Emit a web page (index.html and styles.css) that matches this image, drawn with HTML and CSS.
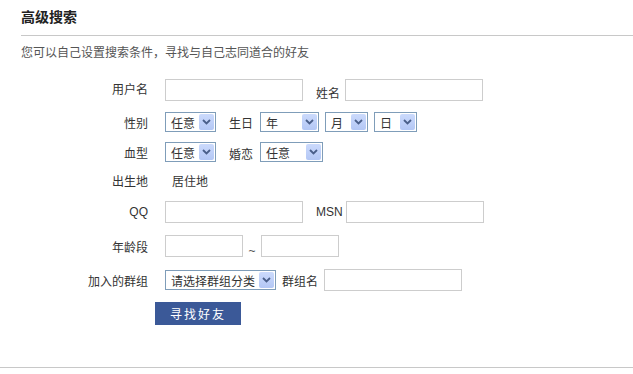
FILE: index.html
```html
<!DOCTYPE html>
<html lang="zh-CN">
<head>
  <meta charset="UTF-8">
  <meta name="viewport" content="width=device-width, initial-scale=1.0"/>
  <title>高级搜索</title>
  <link rel="stylesheet" href="styles.css">
</head>
<body>
  <div class="page">
    <h2 class="title">高级搜索</h2>
    <p class="intro">您可以自己设置搜索条件，寻找与自己志同道合的好友</p>

    <!-- 搜索表单 -->
    <form class="search">
      <div class="row row-user">
        <label class="key key-top">用户名</label>
        <div class="field">
          <input type="text" class="box">
          <span class="sub sub-low">姓名</span>
          <input type="text" class="box">
        </div>
      </div>

      <div class="row row-pick">
        <label class="key">性别</label>
        <div class="field">
          <span class="pick w-any"><span class="pick-text">任意</span><span class="pick-btn"><svg width="9" height="6" viewBox="0 0 9 6"><path d="M1 1l3.5 3.5L8 1" fill="none" stroke="#4a5f8a" stroke-width="1.8"/></svg></span></span>
          <span class="sub sub-wide">生日</span>
          <span class="pick w-year"><span class="pick-text">年</span><span class="pick-btn"><svg width="9" height="6" viewBox="0 0 9 6"><path d="M1 1l3.5 3.5L8 1" fill="none" stroke="#4a5f8a" stroke-width="1.8"/></svg></span></span>
          <span class="pick w-day gap"><span class="pick-text">月</span><span class="pick-btn"><svg width="9" height="6" viewBox="0 0 9 6"><path d="M1 1l3.5 3.5L8 1" fill="none" stroke="#4a5f8a" stroke-width="1.8"/></svg></span></span>
          <span class="pick w-day gap"><span class="pick-text">日</span><span class="pick-btn"><svg width="9" height="6" viewBox="0 0 9 6"><path d="M1 1l3.5 3.5L8 1" fill="none" stroke="#4a5f8a" stroke-width="1.8"/></svg></span></span>
        </div>
      </div>

      <div class="row row-pick">
        <label class="key">血型</label>
        <div class="field">
          <span class="pick w-any"><span class="pick-text">任意</span><span class="pick-btn"><svg width="9" height="6" viewBox="0 0 9 6"><path d="M1 1l3.5 3.5L8 1" fill="none" stroke="#4a5f8a" stroke-width="1.8"/></svg></span></span>
          <span class="sub sub-wide sub-low">婚恋</span>
          <span class="pick w-love"><span class="pick-text">任意</span><span class="pick-btn"><svg width="9" height="6" viewBox="0 0 9 6"><path d="M1 1l3.5 3.5L8 1" fill="none" stroke="#4a5f8a" stroke-width="1.8"/></svg></span></span>
        </div>
      </div>

      <div class="row row-text">
        <label class="key">出生地</label>
        <div class="field">
          <span class="plain">居住地</span>
        </div>
      </div>

      <div class="row">
        <label class="key">QQ</label>
        <div class="field">
          <input type="text" class="box">
          <span class="sub sub-latin">MSN</span>
          <input type="text" class="box">
        </div>
      </div>

      <div class="row">
        <label class="key">年龄段</label>
        <div class="field">
          <input type="text" class="box box-short">
          <span class="tilde">~</span>
          <input type="text" class="box box-short">
        </div>
      </div>

      <div class="row row-group">
        <label class="key">加入的群组</label>
        <div class="field">
          <span class="pick w-group"><span class="pick-text">请选择群组分类</span><span class="pick-btn"><svg width="9" height="6" viewBox="0 0 9 6"><path d="M1 1l3.5 3.5L8 1" fill="none" stroke="#4a5f8a" stroke-width="1.8"/></svg></span></span>
          <span class="sub sub-tight">群组名</span>
          <input type="text" class="box">
        </div>
      </div>

      <div class="actions">
        <button type="button" class="find">寻找好友</button>
      </div>
    </form>
  </div>
</body>
</html>
```

FILE: styles.css
```css
* {
  box-sizing: border-box;
  margin: 0;
  padding: 0;
}

body {
  background: #fff;
  color: #333;
  font-family: "Liberation Sans", "Noto Sans CJK SC", sans-serif;
  font-size: 12px;
}

.page {
  width: 633px;
  height: 368px;
  border-bottom: 1px solid #c8c8c8;
}

.title {
  margin-left: 21px;
  padding-top: 10px;
  padding-bottom: 10px;
  line-height: 15px;
  font-size: 14px;
  font-weight: bold;
  color: #222;
  border-bottom: 1px solid #c8c8c8;
}

.intro {
  margin: 9px 0 0 21px;
  line-height: 16px;
  color: #555;
}

.search {
  margin-top: 18px;
}

.row {
  display: flex;
  align-items: center;
  height: 22px;
  margin-bottom: 12px;
}

.row-user,
.row-group {
  margin-bottom: 11px;
}

.row-pick {
  height: 20px;
  margin-bottom: 10px;
}

.row-text {
  height: 17px;
}

.key {
  width: 165px;
  padding-right: 17px;
  text-align: right;
  color: #333;
}

.key-top {
  align-self: flex-start;
  padding-top: 1px;
}

.field {
  display: flex;
  align-items: center;
  height: 100%;
}

.box {
  width: 138px;
  height: 22px;
  border: 1px solid #cdcdcd;
  outline: none;
  background: #fff;
}

.box-short {
  width: 78px;
}

.sub {
  margin: 0 5px 0 13px;
  white-space: nowrap;
}

.sub-wide {
  margin-right: 7px;
}

.sub-low {
  align-self: flex-end;
}

.sub-latin {
  margin-right: 3px;
}

.sub-tight {
  margin-left: 6px;
  margin-right: 6px;
}

.plain {
  padding-left: 7px;
}

.tilde {
  align-self: flex-end;
  width: 18px;
  text-align: center;
  line-height: 12px;
  color: #555;
}

.pick {
  display: inline-flex;
  align-items: center;
  height: 20px;
  padding: 1px;
  border: 1px solid #7f9db9;
  background: #fff;
}

.pick-text {
  flex: 1;
  padding-left: 4px;
  white-space: nowrap;
}

.pick-btn {
  display: flex;
  align-items: center;
  justify-content: center;
  width: 15px;
  height: 16px;
  border-radius: 2px;
  background: linear-gradient(#cbdafc, #b3c7f5);
}

.w-any { width: 51px; }
.w-year { width: 59px; }
.w-day { width: 43px; }
.w-love { width: 63px; }
.w-group { width: 111px; }

.gap {
  margin-left: 6px;
}

.actions {
  padding-left: 155px;
}

.find {
  width: 86px;
  height: 23px;
  border: none;
  background: #3b5998;
  color: #fff;
  font-family: "Noto Sans CJK SC", sans-serif;
  font-size: 12px;
  letter-spacing: 2px;
  cursor: pointer;
}
```
